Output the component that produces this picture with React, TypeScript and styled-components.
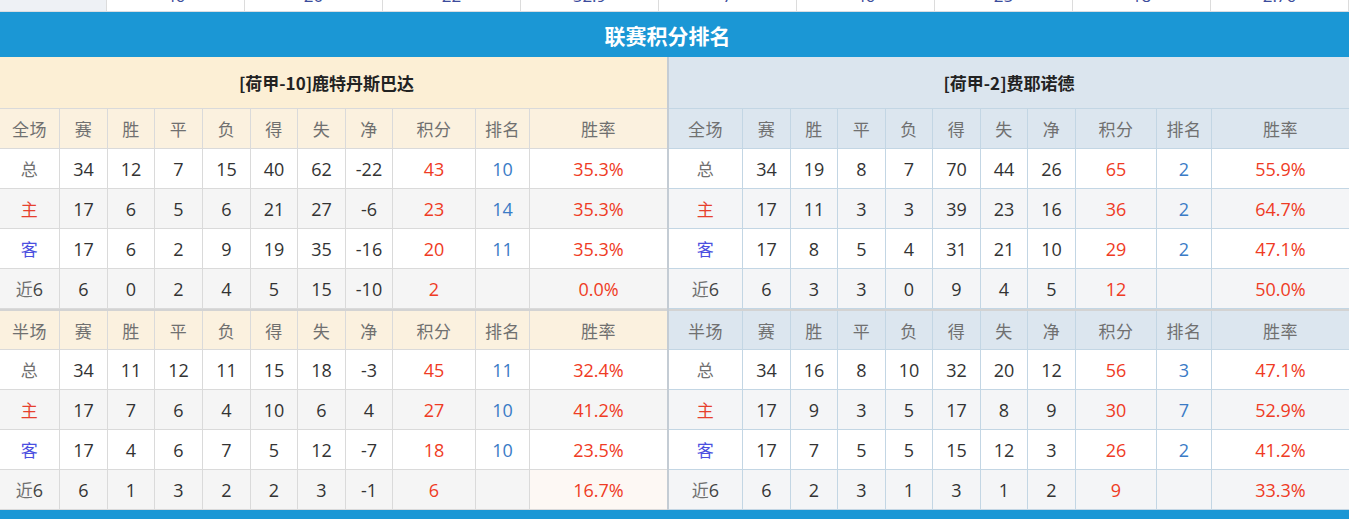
import React from "react";
import styled, { createGlobalStyle, css } from "styled-components";

const GlobalStyle = createGlobalStyle`
  html, body {
    margin: 0;
    padding: 0;
    background: #ffffff;
  }
  body {
    font-family: "Open Sans", "Noto Sans CJK SC", sans-serif;
    color: #333;
  }
`;

type Side = "home" | "away";

const palette = {
  home: {
    team: "#fcefd5",
    head: "#fbf1df",
    line: "#dadada",
    alt: "#f5f5f5",
  },
  away: {
    team: "#dbe5ee",
    head: "#dce6ef",
    line: "#c3d6e4",
    alt: "#f4f5f7",
  },
};

const columns = {
  home: "60px 48px 47px 48px 48px 47px 48px 47px 83px 54px 137px",
  away: "74px 48px 47px 48px 47px 48px 47px 48px 81px 55px 137px",
};

const Page = styled.div`
  width: 1349px;
  overflow: hidden;
`;

const PrevStrip = styled.div`
  display: grid;
  grid-template-columns: 107px repeat(8, 138px) 138px;
  height: 11px;
  overflow: hidden;
  border-bottom: 1px solid #d9dde2;
`;

const PrevCell = styled.div<{ $first?: boolean }>`
  background: ${(p) => (p.$first ? "#eef1f5" : "#fff")};
  border-right: 1px solid #dcdcdc;
  text-align: center;
  font-size: 17px;
  line-height: 17px;
  margin-top: -13px;
  height: 24px;
  color: #3b4b9c;
`;

const Banner = styled.div`
  height: 45px;
  background: #1b97d5;
  color: #fff;
  font-family: "Noto Sans CJK SC", sans-serif;
  font-weight: 700;
  font-size: 21px;
  display: flex;
  align-items: center;
  justify-content: center;
  padding-right: 14px;
`;

const Board = styled.div`
  display: flex;
  border-bottom: 9px solid #1b97d5;
`;

const Panel = styled.div<{ $side: Side }>`
  display: flex;
  flex-direction: column;
  width: ${(p) => (p.$side === "home" ? "667px" : "680px")};
  ${(p) =>
    p.$side === "home" &&
    css`
      border-right: 2px solid #c4ccd4;
    `}
`;

const TeamBar = styled.div<{ $side: Side }>`
  height: 51px;
  border-bottom: 1px solid ${(p) => palette[p.$side].line};
  background: ${(p) => palette[p.$side].team};
  display: flex;
  align-items: center;
  justify-content: center;
  font-family: "Noto Sans CJK SC", sans-serif;
  font-weight: 700;
  font-size: 17px;
  color: #222;
  ${(p) =>
    p.$side === "home" &&
    css`
      padding-right: 14px;
    `}
`;

const Row = styled.div<{ $side: Side; $alt?: boolean; $head?: boolean; $split?: boolean }>`
  display: grid;
  grid-template-columns: ${(p) => columns[p.$side]};
  height: 40px;
  box-sizing: border-box;
  border-bottom: 1px solid ${(p) => palette[p.$side].line};
  background: ${(p) =>
    p.$head ? palette[p.$side].head : p.$alt ? palette[p.$side].alt : "#fff"};
  ${(p) =>
    p.$split &&
    css`
      border-top: 2px solid #d3d3d3;
      height: 41px;
    `}
`;

type Tone = "plain" | "label" | "red" | "blue" | "home" | "away" | "recent";

const toneColor: Record<Tone, string> = {
  plain: "#333",
  label: "#707070",
  red: "#ef3b24",
  blue: "#3a7bc6",
  home: "#e6402e",
  away: "#4b4fe0",
  recent: "#444",
};

const Cell = styled.div<{ $side: Side; $tone: Tone; $tint?: boolean }>`
  display: flex;
  align-items: center;
  justify-content: center;
  border-right: 1px solid ${(p) => palette[p.$side].line};
  font-size: 18px;
  color: ${(p) => toneColor[p.$tone]};
  background: ${(p) => (p.$tint ? "#fdf8f4" : "transparent")};
  white-space: nowrap;
  ${(p) =>
    (p.$tone === "label" || p.$tone === "home" || p.$tone === "away") &&
    css`
      font-family: "Noto Sans CJK SC", sans-serif;
      font-size: 17px;
      letter-spacing: 0.5px;
    `}
  &:last-child {
    border-right: none;
  }
`;

const Cjk = styled.span`
  font-family: "Noto Sans CJK SC", sans-serif;
  font-size: 17px;
  color: #707070;
`;

type Line = [string, number, number, number, number, number, number, number, number, string, string];

interface TeamData {
  title: string;
  full: Line[];
  half: Line[];
}

const teams: Record<Side, TeamData> = {
  home: {
    title: "[荷甲-10]鹿特丹斯巴达",
    full: [
      ["总", 34, 12, 7, 15, 40, 62, -22, 43, "10", "35.3%"],
      ["主", 17, 6, 5, 6, 21, 27, -6, 23, "14", "35.3%"],
      ["客", 17, 6, 2, 9, 19, 35, -16, 20, "11", "35.3%"],
      ["近6", 6, 0, 2, 4, 5, 15, -10, 2, "", "0.0%"],
    ],
    half: [
      ["总", 34, 11, 12, 11, 15, 18, -3, 45, "11", "32.4%"],
      ["主", 17, 7, 6, 4, 10, 6, 4, 27, "10", "41.2%"],
      ["客", 17, 4, 6, 7, 5, 12, -7, 18, "10", "23.5%"],
      ["近6", 6, 1, 3, 2, 2, 3, -1, 6, "", "16.7%"],
    ],
  },
  away: {
    title: "[荷甲-2]费耶诺德",
    full: [
      ["总", 34, 19, 8, 7, 70, 44, 26, 65, "2", "55.9%"],
      ["主", 17, 11, 3, 3, 39, 23, 16, 36, "2", "64.7%"],
      ["客", 17, 8, 5, 4, 31, 21, 10, 29, "2", "47.1%"],
      ["近6", 6, 3, 3, 0, 9, 4, 5, 12, "", "50.0%"],
    ],
    half: [
      ["总", 34, 16, 8, 10, 32, 20, 12, 56, "3", "47.1%"],
      ["主", 17, 9, 3, 5, 17, 8, 9, 30, "7", "52.9%"],
      ["客", 17, 7, 5, 5, 15, 12, 3, 26, "2", "41.2%"],
      ["近6", 6, 2, 3, 1, 3, 1, 2, 9, "", "33.3%"],
    ],
  },
};

const headLabels = ["赛", "胜", "平", "负", "得", "失", "净", "积分", "排名", "胜率"];

function HeadRow({ side, first, split }: { side: Side; first: string; split?: boolean }) {
  return (
    <Row $side={side} $head $split={split}>
      {[first, ...headLabels].map((t, i) => (
        <Cell key={i} $side={side} $tone="label">
          {t}
        </Cell>
      ))}
    </Row>
  );
}

function DataRow({ side, line, alt, tintLast }: { side: Side; line: Line; alt: boolean; tintLast?: boolean }) {
  const [name, ...rest] = line;
  const nameTone: Tone = name === "主" ? "home" : name === "客" ? "away" : name === "总" ? "label" : "recent";
  return (
    <Row $side={side} $alt={alt}>
      <Cell $side={side} $tone={nameTone}>
        {name === "近6" ? (
          <>
            <Cjk>近</Cjk>6
          </>
        ) : (
          name
        )}
      </Cell>
      {rest.map((v, i) => {
        const tone: Tone = i === 7 || i === 9 ? "red" : i === 8 ? "blue" : "plain";
        return (
          <Cell key={i} $side={side} $tone={tone} $tint={tintLast && i === 9}>
            {v}
          </Cell>
        );
      })}
    </Row>
  );
}

function TeamPanel({ side }: { side: Side }) {
  const t = teams[side];
  return (
    <Panel $side={side}>
      <TeamBar $side={side}>{t.title}</TeamBar>
      <HeadRow side={side} first="全场" />
      {t.full.map((l, i) => (
        <DataRow key={i} side={side} line={l} alt={i % 2 === 1} />
      ))}
      <HeadRow side={side} first="半场" split />
      {t.half.map((l, i) => (
        <DataRow key={i} side={side} line={l} alt={i % 2 === 1} tintLast={side === "home" && i === 3} />
      ))}
    </Panel>
  );
}

const prevValues = ["", "46", "20", "22", "52.9", "7", "46", "25", "18", "2.76"];

export default function App() {
  return (
    <Page>
      <GlobalStyle />
      <PrevStrip>
        {prevValues.map((v, i) => (
          <PrevCell key={i} $first={i === 0}>
            {v}
          </PrevCell>
        ))}
      </PrevStrip>
      <Banner>联赛积分排名</Banner>
      <Board>
        <TeamPanel side="home" />
        <TeamPanel side="away" />
      </Board>
    </Page>
  );
}
